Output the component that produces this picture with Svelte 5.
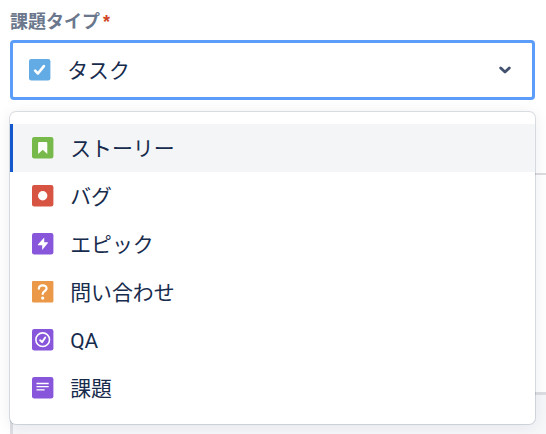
<script lang="ts">
  type Kind = 'task' | 'story' | 'bug' | 'epic' | 'question' | 'qa' | 'issue';

  const options: { kind: Kind; label: string }[] = [
    { kind: 'story', label: 'ストーリー' },
    { kind: 'bug', label: 'バグ' },
    { kind: 'epic', label: 'エピック' },
    { kind: 'question', label: '問い合わせ' },
    { kind: 'qa', label: 'QA' },
    { kind: 'issue', label: '課題' }
  ];

  let focused = $state(0);
</script>

{#snippet icon(kind: Kind)}
  <svg class="icon {kind}" viewBox="0 0 21 21" aria-hidden="true">
    <rect class="tile" width="21" height="21" rx={kind === 'question' ? 1 : 2.2} />
    {#if kind === 'task'}
      <path class="line" stroke-width="2.6" d="M6 11.4l2.8 2.8L14.6 7" />
    {:else if kind === 'story'}
      <path class="fill" d="M7 4.8h7q1 0 1 1v10.9L10.5 12.4 6 16.7V5.8q0-1 1-1z" />
    {:else if kind === 'bug'}
      <circle class="fill" cx="10.5" cy="10.5" r="4.6" />
    {:else if kind === 'epic'}
      <path class="fill" d="M12 4.4v4.8h3.3q.6 0 .3.6L10 16.8V12H6.1q-.7 0-.3-.6z" />
    {:else if kind === 'question'}
      <path class="line" stroke-width="2.2" d="M6.7 7.6c.2-4.5 7.7-4.3 7.6-.3 0 2.6-3.8 2.7-3.8 5.4" />
      <circle class="fill" cx="10.5" cy="16.7" r="1.6" />
    {:else if kind === 'qa'}
      <circle class="line" stroke-width="1.5" cx="10.5" cy="10.5" r="6.7" />
      <path class="line" stroke-width="1.9" d="M8 11l1.9 1.9 3.1-4.5" />
    {:else}
      <path class="line bars" stroke-width="1.3" d="M4.4 6.4h12M4.4 9.5h12M4.4 12.6h8" />
    {/if}
  </svg>
{/snippet}

<div class="page">
  <label class="label" for="issue-type">課題タイプ<span class="required">*</span></label>

  <div class="select">
    <button class="control" id="issue-type" aria-haspopup="listbox" aria-expanded="true">
      {@render icon('task')}
      <span class="text value">タスク</span>
      <svg class="chevron" viewBox="0 0 14 10" aria-hidden="true">
        <path d="M2.7 3L7 7.1 11.3 3" />
      </svg>
    </button>

    <ul class="menu" role="listbox">
      {#each options as option, i}
        <li
          class="option"
          class:focused={i === focused}
          role="option"
          aria-selected={i === focused}
          onmouseenter={() => (focused = i)}
        >
          {@render icon(option.kind)}
          <span class="text">{option.label}</span>
        </li>
      {/each}
    </ul>
  </div>

  <div class="divider"></div>
  <div class="editor"></div>
</div>

<style>
  :global(body) { background: #fff; }
  .page {
    box-sizing: border-box;
    height: 434px;
    padding-left: 10px;
    overflow: hidden;
    display: flex;
    flex-direction: column;
    font-family: "Noto Sans CJK JP", sans-serif;
    color: #172b4d;
  }
  .label { flex: none; height: 40px; line-height: 41px; font-size: 18px; font-weight: 700; color: #6b778c; }
  .required { margin-left: 3px; color: #cf4526; font-size: 18px; font-family: "Liberation Sans", sans-serif; }

  .select { position: relative; flex: none; width: 525px; height: 60px; }
  .control {
    box-sizing: border-box;
    width: 100%;
    height: 100%;
    display: flex;
    align-items: center;
    padding: 0 20px 0 16.4px;
    border: 3px solid #5c9dfa;
    border-radius: 4px;
    background: #fff;
    color: inherit;
    font: inherit;
  }
  .text { padding-top: 2px; line-height: 24px; font-family: Roboto, "Noto Sans CJK JP", sans-serif; font-size: 20.9px; }
  .value { flex: 1; margin-left: 16.4px; text-align: left; }
  .chevron { width: 14px; height: 10px; fill: none; stroke: #42526e; stroke-width: 2.8; stroke-linecap: round; stroke-linejoin: round; }

  .menu {
    position: absolute;
    top: 72px;
    left: 0;
    z-index: 1;
    box-sizing: border-box;
    width: 525px;
    margin: 0;
    padding: 12px 0;
    list-style: none;
    background: #fff;
    border-radius: 6px;
    box-shadow: 0 0 0 1px rgba(9, 30, 66, 0.13), 0 2px 16px rgba(9, 30, 66, 0.09);
  }
  .option {
    box-sizing: border-box;
    height: 48px;
    display: flex;
    align-items: center;
    gap: 16.4px;
    padding-left: 19.4px;
    border-left: 3px solid transparent;
  }
  .option.focused { background: #f4f5f7; border-left-color: #1558cc; }

  .icon { flex: none; width: 21.4px; height: 21.4px; }
  .fill { fill: #fff; }
  .line { fill: none; stroke: #fff; stroke-linecap: round; stroke-linejoin: round; }
  .bars { stroke-linecap: butt; }
  .task .tile { fill: #63abe4; }
  .story .tile { fill: #78b94c; }
  .bug .tile { fill: #d75442; }
  .epic .tile, .qa .tile, .issue .tile { fill: #8856da; }
  .question .tile { fill: #eb9849; }

  .divider { flex: none; height: 75px; box-sizing: border-box; border-bottom: 2px solid #dcdddf; }
  .editor { flex: none; height: 260px; margin-top: 217px; box-sizing: border-box; border: 3px solid #dcdee3; border-right: 0; background: #f6f7f9; }
</style>
